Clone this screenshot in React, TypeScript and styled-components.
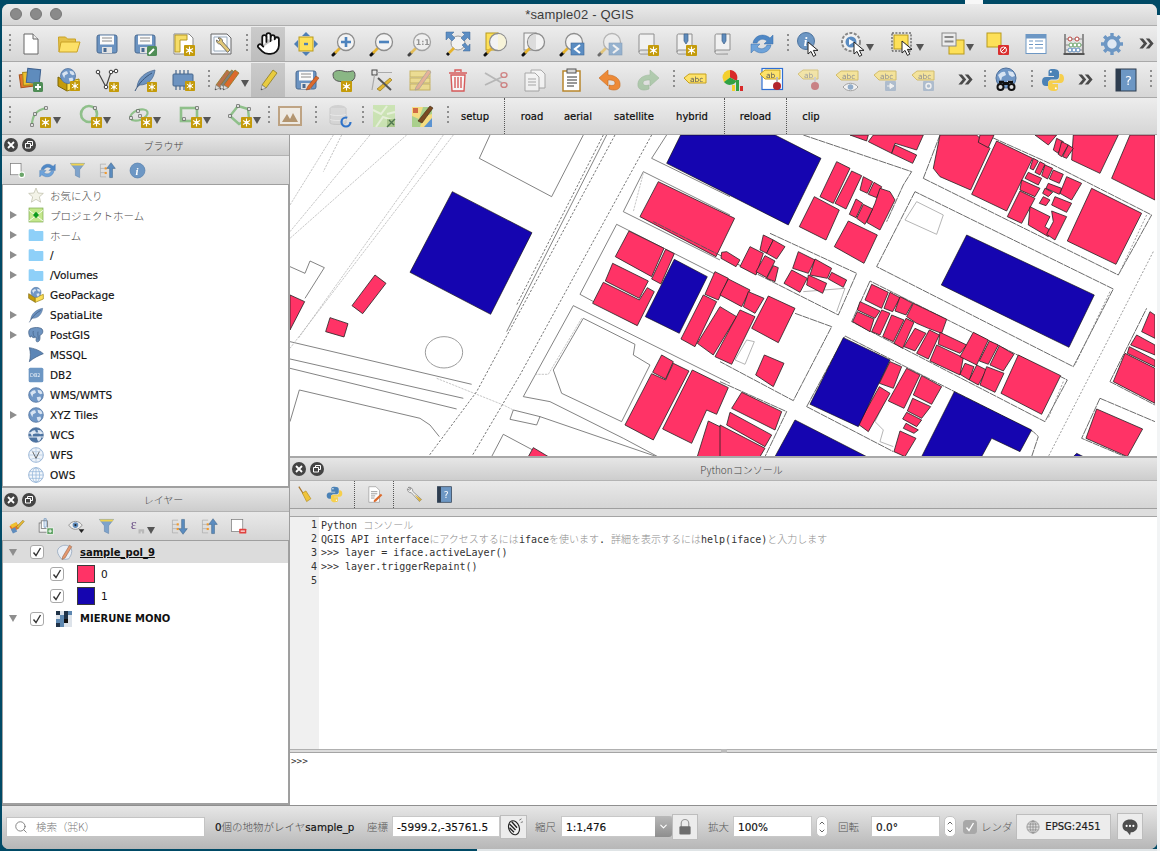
import React from 'react';
import styled, { createGlobalStyle } from 'styled-components';
import { Hand, Search, ChevronDown, ChevronUp } from 'lucide-react';

const Global = createGlobalStyle`
  html, body { margin: 0; padding: 0; background: #004a66; }
  * { box-sizing: border-box; }
`;

const UI = `"DejaVu Sans", "Noto Sans CJK JP", sans-serif`;
const CJK = `"Noto Sans CJK JP", sans-serif`;

/* ---------- icon parts ---------- */
const Badge = ({ x = 13, y = 13, s = 10 }: { x?: number; y?: number; s?: number }) => (
  <g transform={`translate(${x} ${y}) scale(${s / 10})`}>
    <rect width="10" height="10" rx="0.8" fill="#c49b0a" />
    <path d="M5 1.3v7.4M1.8 3.2l6.4 3.6M8.2 3.2L1.8 6.8" stroke="#fff" strokeWidth="1" />
    <circle cx="5" cy="5" r="1.6" fill="#fff" />
  </g>
);
const Glass = ({ children }: { children?: React.ReactNode }) => (
  <g>
    <path d="M1 23l2-2" stroke="#111" strokeWidth="3" strokeLinecap="round" />
    <path d="M3 21l5-5" stroke="#e6b32e" strokeWidth="2.6" />
    <circle cx="14" cy="10" r="8.5" fill="#f3f3f3" stroke="#8d8d8d" strokeWidth="1.3" />
    {children}
  </g>
);
const Cursor = ({ x = 10, y = 9 }: { x?: number; y?: number }) => (
  <path transform={`translate(${x} ${y})`} d="M0 0v12l3-2.6 2.4 5 2.4-1.2-2.4-4.8H10z" fill="#fff" stroke="#222" strokeWidth="1" strokeLinejoin="round" />
);
const Floppy = () => (
  <g>
    <rect x="2" y="3" width="20" height="18" rx="2" fill="#6b93c1" stroke="#4a6a90" />
    <rect x="5" y="3.5" width="14" height="9" fill="#fbfbfb" />
    <path d="M7 6h10M7 9h10" stroke="#8a8a8a" />
    <rect x="7" y="15" width="10" height="6" fill="#e3e3e3" />
    <rect x="8.5" y="16" width="3" height="4" fill="#4a6a90" />
  </g>
);
const Globe = ({ cx = 12, cy = 12, r = 10, c = '#7097c6', l = '#d8e4f2' }: { cx?: number; cy?: number; r?: number; c?: string; l?: string }) => (
  <g transform={`translate(${cx} ${cy}) scale(${r / 10})`}>
    <circle r="10" fill={c} stroke="#4d6f9b" />
    <path d="M-8-3c3-3 5-4 7-3l1 3-4 2-1 4zM2-7l5 1 2 4-3 1-3-2zM1 3l5-1 1 3-3 4-2-2z" fill={l} />
  </g>
);
const Tag = ({ t = 'abc', y = 2 }: { t?: string; y?: number }) => (
  <g transform={`translate(0 ${y})`}>
    <path d="M1 6l5-4h17v9H6z" fill="#fde26a" stroke="#c6a11c" />
    <text x="7" y="9.5" fontSize="7.4" fontFamily="DejaVu Sans, sans-serif" fill="#5b5b5b">{t}</text>
  </g>
);
const Pencil = ({ t = '', c = '#e8cb3f' }: { t?: string; c?: string }) => (
  <g transform={t}>
    <path d="M6 17L17 2l4 3L10 20z" fill={c} stroke="#8c7a24" strokeWidth="0.8" />
    <path d="M6 17l4 3-5 2z" fill="#ddd" stroke="#777" strokeWidth="0.6" />
    <path d="M5.6 20.4L5 22l1.6-.7z" fill="#222" />
  </g>
);
const Page = ({ x = 0, y = 0 }: { x?: number; y?: number }) => (
  <path transform={`translate(${x} ${y})`} d="M0 0h10l4 4v14H0z" fill="#fff" stroke="#777" />
);
const Scroll = () => (
  <path d="M3 4c0-2 1-2 2-2h13v16H5c-1 0-2 .6-2 2zM3 20c0 1.5 1 2 2 2h11" fill="#f1f1f1" stroke="#8e8e8e" />
);
const Book = () => (
  <path d="M10 2h4v7l-2 3-2-3z" fill="#5f8cbd" stroke="#41618a" strokeWidth="0.7" />
);
const Abc = () => <Tag y={1} />;
const Feather = ({ c = '#6d93c0' }: { c?: string }) => (
  <g>
    <path d="M4 19C5 10 12 4 22 2c-1 9-7 15-15 15z" fill={c} stroke="#47668c" strokeWidth="0.7" />
    <path d="M2 23C6 15 12 9 19 5" stroke="#39557a" fill="none" />
  </g>
);
const Nodes = ({ d, c = '#8fc08a' }: { d: string; c?: string }) => (
  <path d={d} fill="none" stroke={c} strokeWidth="2.2" />
);
const N = ({ x, y }: { x: number; y: number }) => <rect x={x - 1.3} y={y - 1.3} width="2.6" height="2.6" fill="#eee" stroke="#555" strokeWidth="0.7" />;

const icons: Record<string, React.ReactNode> = {
  new: (<g><path d="M5 2h9l5 5v15H5z" fill="#fff" stroke="#666" /><path d="M14 2v5h5" fill="#eee" stroke="#666" /></g>),
  open: (<g><path d="M2 20L1.5 5h7l2 2h8v4" fill="#e5c24a" stroke="#c9a227" /><path d="M4 10h19l-3 10H2z" fill="#fde168" stroke="#c9a227" /></g>),
  save: <Floppy />,
  saveas: (<g><Floppy /><rect x="14" y="14" width="10" height="10" rx="1.5" fill="#4f8d56" /><path d="M16 22l5-5" stroke="#fff" strokeWidth="2" /></g>),
  layout: (<g><path d="M3 2h15l4 4v16H3z" fill="#fff" stroke="#888" /><path d="M4 3h12v5H9v12H4z" fill="#f6dd68" stroke="#b79a24" /><Badge x={13} y={13} s={11} /></g>),
  layoutmgr: (<g><path d="M2 2h16l4 4v16H2z" fill="#f3f6fb" stroke="#666" /><path d="M5 5h13v14H5z" fill="#fff" stroke="#9ab" /><path d="M9 6a3.4 3.4 0 0 1 4.5 3.6L21 18l-2.4 2.4L11 12A3.4 3.4 0 0 1 7.5 8l2 1.4 1.6-1.6z" fill="#e2c878" stroke="#555" strokeWidth="0.8" /></g>),
  pantosel: (<g><rect x="5" y="5" width="14" height="14" fill="#fde058" stroke="#b89a1c" /><path d="M12 0l4 4h-8zM12 24l-4-4h8zM0 12l4-4v8zM24 12l-4 4V8z" fill="#4f7fb5" /><path d="M10 10.8h4v2.4h-4z" fill="#4f7fb5" /></g>),
  zoomin: <Glass><path d="M14 5v10M9 10h10" stroke="#4d83bd" strokeWidth="2.6" /></Glass>,
  zoomout: <Glass><path d="M9 10h10" stroke="#4d83bd" strokeWidth="2.6" /></Glass>,
  zoom11: (<g opacity="0.75"><Glass><text x="7.8" y="13" fontSize="7.8" fontWeight="700" fontFamily="DejaVu Sans, sans-serif" fill="#777">1:1</text></Glass></g>),
  zoomfull: (<g><circle cx="12" cy="11" r="7" fill="#f2f2f2" stroke="#999" /><path d="M0 0h8l-2.5 2.5L9 6 6 9 2.5 5.5 0 8zM24 0v8l-2.5-2.5L18 9l-3-3 3.5-3.5L16 0zM24 19h-7l2.5-2.5L16 13l3-2 3 3.5L24 12z" fill="#5c8ec4" stroke="#3c6694" strokeWidth="0.5" /><path d="M1 23l2-2" stroke="#111" strokeWidth="3" /><path d="M3 21l5-5" stroke="#e6b32e" strokeWidth="2.6" /></g>),
  zoomsel: (<g><rect x="2" y="1" width="12" height="17" fill="#fde058" stroke="#b89a1c" /><Glass><path d="M14 2a8 8 0 0 1 0 16z" fill="#f7f3d8" /></Glass></g>),
  zoomlayer: (<g><rect x="2" y="1" width="12" height="17" fill="#f3f3f3" stroke="#888" /><Glass><path d="M14 2a8 8 0 0 0 0 16z" fill="#dcdcdc" /></Glass></g>),
  zoomlast: (<g><Glass /><rect x="11" y="11" width="13" height="12" fill="#5a8cc2" stroke="#3f6898" strokeWidth="0.6" /><path d="M20 13l-5 4 5 4" fill="none" stroke="#fff" strokeWidth="2.2" /></g>),
  zoomnext: (<g opacity="0.55"><Glass /><rect x="11" y="11" width="13" height="12" fill="#5a8cc2" stroke="#3f6898" strokeWidth="0.6" /><path d="M15 13l5 4-5 4" fill="none" stroke="#fff" strokeWidth="2.2" /></g>),
  bmnew: (<g><Scroll /><Badge x={12} y={13} s={11} /></g>),
  bmshow: (<g><Scroll /><Book /><Badge x={12} y={13} s={11} /></g>),
  bmlist: (<g><Scroll /><Book /></g>),
  refresh: (<g><path d="M3 11C4 4 13 0 20 6l3-3v9h-9l3-3c-4-3-8-2-10 2z" fill="#4f88c6" stroke="#3a6ea8" strokeWidth="0.5" /><path d="M21 13C20 20 11 24 4 18l-3 3v-9h9l-3 3c4 3 8 2 10-2z" fill="#6ea3da" stroke="#3a6ea8" strokeWidth="0.5" /></g>),
  identify: (<g><circle cx="9" cy="9" r="8.5" fill="#6d97c4" stroke="#4d749f" /><text x="6.8" y="14" fontSize="13" fontWeight="700" fontStyle="italic" fontFamily="Liberation Serif, serif" fill="#fff">i</text><Cursor x={11} y={10} /></g>),
  action: (<g><circle cx="10" cy="10" r="9" fill="#f1f1f1" stroke="#888" strokeWidth="2" strokeDasharray="3 1.5" /><circle cx="10" cy="10" r="5.5" fill="#5a8cc2" /><path d="M8 7l5 3-5 3z" fill="#fff" /><Cursor x={13} y={10} /></g>),
  select: (<g><rect x="1" y="1" width="19" height="18" fill="none" stroke="#333" strokeDasharray="2 1.4" /><rect x="3" y="3" width="14" height="14" fill="#fde058" stroke="#b89a1c" /><Cursor x={11} y={9} /></g>),
  selattr: (<g><rect x="8" y="8" width="15" height="14" fill="#fde058" stroke="#b89a1c" /><rect x="1" y="1" width="14" height="13" fill="#ececec" stroke="#888" /><path d="M3.5 5h9M3.5 9.5h9" stroke="#888" strokeWidth="2" /></g>),
  deselect: (<g><rect x="1" y="1" width="14" height="14" fill="#fde058" stroke="#b89a1c" /><rect x="12" y="13" width="11" height="10" rx="1" fill="#d92f2f" /><circle cx="17.5" cy="18" r="3" fill="none" stroke="#fff" /><path d="M15 20l5-5" stroke="#fff" /></g>),
  table: (<g><rect x="2" y="2.5" width="20" height="19" fill="#fff" stroke="#6d97c4" /><rect x="2" y="2.5" width="20" height="4" fill="#6d97c4" /><path d="M5 9h4M11 9h8M5 12.5h4M11 12.5h8M5 16h4M11 16h8" stroke="#6d97c4" /></g>),
  stats: (<g><path d="M3 2v20M21 2v20" stroke="#555" strokeWidth="1.2" /><path d="M3 7h18M3 13h18M3 18h18" stroke="#888" /><path d="M1.5 22h21" stroke="#555" strokeWidth="2" />{[8, 15].map(x => <circle key={x} cx={x} cy="7" r="2" fill="#fff" stroke="#b9423d" />)}{[9, 13, 17].map(x => <circle key={x} cx={x} cy="13" r="2" fill="#fff" stroke="#6ba56a" />)}{[8, 12, 16].map(x => <circle key={x} cx={x} cy="18" r="2" fill="#fff" stroke="#5f8cbd" />)}</g>),
  gear: (<g><circle cx="12" cy="12" r="6.5" fill="#dfe8f3" stroke="#6d97c4" strokeWidth="3.6" /><path d="M12 1v4M12 19v4M1 12h4M19 12h4M4.200 4.200L7 7M17 17l2.800 2.800M19.800 4.200L17 7M7 17l-2.800 2.800" stroke="#6d97c4" strokeWidth="3.400" /></g>),

  dsm: (<g><rect x="1" y="6" width="13" height="13" fill="#e5752c" stroke="#a8521c" transform="rotate(-8 7 12)" /><rect x="4" y="4" width="13" height="13" fill="#efc12f" stroke="#a98c1e" transform="rotate(-4 10 10)" /><rect x="8" y="1" width="13" height="14" fill="#5f8cbd" stroke="#3f6290" transform="rotate(6 14 8)" /><rect x="14" y="14" width="10" height="10" rx="1.5" fill="#4f8d56" /><path d="M19 16v6M16 19h6" stroke="#fff" strokeWidth="1.8" /></g>),
  gpkg: (<g><path d="M1 9l9 5v9l-9-5z" fill="#c49b0a" stroke="#7a6407" /><path d="M10 14l12-3v8l-12 4z" fill="#fde058" stroke="#9b800a" /><Globe cx={11} cy={8} r={7.5} /><Badge x={13} y={13} s={10} /></g>),
  vertices: (<g><path d="M3 4l8 15 5-15 5-1" fill="none" stroke="#444" strokeWidth="1.2" /><circle cx="3" cy="4" r="1.8" fill="#fff" stroke="#333" /><circle cx="11" cy="19" r="1.8" fill="#fff" stroke="#333" /><circle cx="16" cy="4" r="1.8" fill="#fff" stroke="#333" /><circle cx="21" cy="3" r="1.8" fill="#fff" stroke="#333" /><Badge x={14} y={14} /></g>),
  spatialite: (<g><Feather /><Badge x={14} y={14} /></g>),
  scratch: (<g><rect x="2" y="6" width="20" height="12" rx="1" fill="#6d93c0" stroke="#47668c" /><path d="M5 2v4M9 2v4M13 2v4M17 2v4M5 18v4M9 18v4M13 18v4" stroke="#47668c" strokeWidth="1.2" /><Badge x={14} y={13} /></g>),
  edits: (<g><Pencil c="#b9714a" t="translate(-6 0)" /><Pencil c="#7f7f7f" t="translate(-1 0) scale(.98)" /><Pencil c="#dc6a2c" t="translate(2 0)" /></g>),
  pencil: <Pencil />,
  saveedits: (<g><Floppy /><path d="M12 22l2-4L22 8l3 2-9 11z" fill="#dc6a2c" stroke="#8a3f16" strokeWidth="0.5" /></g>),
  addpoly: (<g><path d="M1 6c1-4 7-4 10-3s6 1 9 0 4 5 2 8-7 4-11 3-10 0-10-8z" fill="#8ab785" stroke="#555" /><Badge x={9} y={13} s={11} /></g>),
  vertextool: (<g><rect x="2" y="2" width="5" height="5" fill="none" stroke="#444" /><path d="M7 4.5h15M4.5 7L2 22" stroke="#aaa" strokeWidth="1.2" /><path d="M7 21L20 10l2 2L10 23z" fill="#e2b634" stroke="#7f6a18" strokeWidth="0.6" /><path d="M8 10l13 12" stroke="#555" strokeWidth="2" /></g>),
  multiedit: (<g opacity="0.65"><rect x="2" y="3" width="20" height="6" fill="#f0d768" stroke="#b79a24" /><rect x="2" y="10" width="20" height="5" fill="#f0d768" stroke="#b79a24" /><rect x="2" y="16" width="20" height="6" fill="#f0d768" stroke="#b79a24" /><path d="M8 19L20 2l3 2-12 17-4 1z" fill="#e59870" stroke="#777" strokeWidth="0.6" /></g>),
  trash: (<g opacity="0.75"><path d="M5 7h14l-1 16H6z" fill="#fff" stroke="#d32f2f" strokeWidth="1.4" /><path d="M3 5h18M9 4V2h6v2M9 9v11M12 9v11M15 9v11" stroke="#d32f2f" strokeWidth="1.4" fill="none" /></g>),
  cut: (<g opacity="0.6"><path d="M1 5l17 10M1 17L18 9" stroke="#9a9a9a" strokeWidth="1.8" /><ellipse cx="20" cy="7" rx="3" ry="2.4" fill="none" stroke="#c24545" strokeWidth="1.4" /><ellipse cx="20" cy="17" rx="3" ry="2.4" fill="none" stroke="#c24545" strokeWidth="1.4" /></g>),
  copy: (<g opacity="0.55"><Page x={9} y={2} /><Page x={3} y={5} /><path d="M6 11h8M6 14h8M6 17h8" stroke="#777" /></g>),
  paste: (<g><rect x="3" y="3" width="17" height="20" fill="#fff" stroke="#b8862c" strokeWidth="1.5" /><rect x="7" y="1" width="9" height="4" fill="#d8d8d8" stroke="#555" /><path d="M7 9h10M7 12h10M7 15h10M7 18h7" stroke="#333" /></g>),
  undo: (<g><path d="M1 10l9-8v5c7 0 13 4 12 11-.6 4-6 5-11 3v-4c3 1 6 .6 6-2 0-3-4-3-7-3v6z" fill="#ed8a37" stroke="#c56a20" strokeWidth="0.6" /></g>),
  redo: (<g opacity="0.5"><path d="M23 10l-9-8v5C7 7 1 11 2 18c.6 4 6 5 11 3v-4c-3 1-6 .6-6-2 0-3 4-3 7-3v6z" fill="#7fb27a" stroke="#5e925a" strokeWidth="0.6" /></g>),
  label: <Tag y={4} />,
  diagram: (<g><path d="M9 2a7.5 7.5 0 0 1 6.5 11L9 9.5z" fill="#d92a2a" /><path d="M1.5 9.5A7.5 7.5 0 0 1 9 2v7.5l-6 5z" fill="#f3cf2d" /><path d="M3 14l6-4.5 6.500 3.500A7.500 7.500 0 0 1 3 14z" fill="#2fa143" /><rect x="11" y="17" width="3" height="6" fill="#f3cf2d" /><rect x="15" y="12" width="3" height="11" fill="#2fa143" /><rect x="19" y="18" width="3" height="5" fill="#d92a2a" /></g>),
  labelpin: (<g><rect x="3" y="0.5" width="20.500" height="21" fill="#fff" stroke="#2f6fd3" strokeWidth="1.200" /><path d="M1 6l5-4h15v9H6z" fill="#fde26a" stroke="#c6a11c" /><text x="7" y="9.500" fontSize="7.400" fontFamily="DejaVu Sans, sans-serif" fill="#5b5b5b">ab</text><circle cx="18" cy="18" r="4" fill="#b3262d" /><path d="M18 9v5" stroke="#bbb" strokeWidth="2" /></g>),
  labelshow: (<g opacity="0.5"><path d="M1 6l5-4h15v9H6z" fill="#fde26a" stroke="#c6a11c" /><text x="7" y="9.500" fontSize="7.400" fontFamily="DejaVu Sans, sans-serif" fill="#5b5b5b">ab</text><circle cx="18" cy="18" r="4" fill="#b3262d" /><path d="M18 9v5" stroke="#bbb" strokeWidth="2" /></g>),
  labeleye: (<g opacity="0.6"><Abc /><path d="M8 19c4-5 11-5 15 0-4 5-11 5-15 0z" fill="#fff" stroke="#777" /><circle cx="15.500" cy="19" r="2.800" fill="#5f8cbd" /></g>),
  labelmove: (<g opacity="0.6"><Abc /><rect x="12" y="13" width="11" height="10" rx="1" fill="#8ea6c2" /><path d="M14 18h3v-2.500l4 2.500-4 2.500V18" fill="#fff" stroke="#fff" /></g>),
  labelrot: (<g opacity="0.6"><Abc /><rect x="12" y="13" width="11" height="10" rx="1" fill="#8ea6c2" /><circle cx="17.500" cy="18" r="2.500" fill="none" stroke="#fff" strokeWidth="1.400" /></g>),
  metasearch: (<g><Globe cx={12} cy={10} r={10} /><path d="M9 14h6v3H9z" fill="#111" /><circle cx="6.500" cy="19" r="4" fill="#111" /><circle cx="17.500" cy="19" r="4" fill="#111" /><circle cx="6.500" cy="19" r="2" fill="#ddd" /><circle cx="17.500" cy="19" r="2" fill="#ddd" /><path d="M5 14h5M14 14h5" stroke="#111" strokeWidth="2.400" /></g>),
  python: (<g><path d="M12 1C7 1 7.500 3 7.500 5.500V8H13v1H5C2 9 1 11 1 13.500S2 18 5 18h2v-3c0-2 1.500-3.500 3.500-3.500H15c1.700 0 3-1.300 3-3V4.500C18 2 15.500 1 12 1z" fill="#4b82b6" /><circle cx="9.800" cy="3.800" r="1" fill="#fff" /><path d="M12.500 23c5 0 4.500-2 4.500-4.500V16h-5.500v-1H19c3 0 4-2 4-4.500S22 6 19 6h-.500v3.500c0 2-1.500 3-3.500 3H10c-1.700 0-3 1.300-3 3V19c0 2.500 2 4 5.500 4z" fill="#f6cf4d" /><circle cx="14.800" cy="20.200" r="1" fill="#fff" /></g>),
  help: (<g><rect x="2" y="1" width="20" height="22" fill="#6d97c4" stroke="#2e3d4f" /><rect x="2" y="1" width="5" height="22" fill="#2e3d4f" /><text x="11" y="16.500" fontSize="13" fontFamily="DejaVu Sans, sans-serif" fill="#fff">?</text></g>),

  dline: (<g><Nodes d="M4 21c0-9 5-15 14-17" /><N x={4} y={21} /><N x={7} y={10} /><N x={18} y={4} /><Badge x={12} y={13} s={11} /></g>),
  dcircle: (<g><circle cx="11" cy="10" r="8" fill="none" stroke="#8fc08a" strokeWidth="2.600" /><N x={17} y={4} /><Badge x={13} y={13} s={11} /></g>),
  dellipse: (<g><ellipse cx="11" cy="11" rx="9" ry="5" transform="rotate(-20 11 11)" fill="none" stroke="#8fc08a" strokeWidth="2.200" /><N x={3} y={14} /><N x={10} y={7} /><N x={12} y={12} /><Badge x={13} y={13} s={11} /></g>),
  drect: (<g><rect x="3" y="4" width="16" height="13" fill="none" stroke="#8fc08a" strokeWidth="2.600" /><N x={19} y={4} /><N x={6} y={15} /><Badge x={13} y={13} s={11} /></g>),
  dpoly: (<g><path d="M10 2l10 3 1 10-10 5-9-8z" fill="none" stroke="#8fc08a" strokeWidth="2.400" /><N x={10} y={2} /><N x={2} y={12} /><N x={21} y={5} /><Badge x={13} y={13} s={11} /></g>),
  raster: (<g opacity="0.75"><rect x="1" y="3" width="22" height="18" fill="#f2ece3" stroke="#b28e63" strokeWidth="2" /><path d="M4 18l5-8 3 5 3-6 5 9z" fill="#a57c4a" /></g>),
  dbrefresh: (<g opacity="0.45"><ellipse cx="10" cy="4" rx="8" ry="3" fill="#b5b5b5" /><path d="M2 4v15c0 2 16 2 16 0V4" fill="#c9c9c9" stroke="#aaa" /><path d="M2 10c0 2 16 2 16 0M2 15c0 2 16 2 16 0" stroke="#eee" fill="none" /></g>),
  dbloop: <circle cx="18" cy="18" r="4.500" fill="none" stroke="#2f73c9" strokeWidth="2.200" strokeDasharray="22 6" />,
  topomap: (<g opacity="0.8"><rect x="1" y="1" width="22" height="22" fill="#c5e3a8" /><path d="M1 6l8 4 6-8M4 23l7-10 12 4M15 10l8-2" stroke="#e6f2d8" strokeWidth="2" fill="none" /><rect x="15" y="15" width="8" height="8" fill="#9ec27a" /><path d="M15 23l8-8M17 16l5 5" stroke="#2c5e2c" strokeWidth="1.400" /></g>),
  composer: (<g><rect x="2" y="3" width="20" height="20" fill="#f5dc80" /><path d="M2 12l7 3 4-12h9v7l-9 3-3 10H2z" fill="#a9cf8c" /><path d="M14 23l8-9v9z" fill="#5b93d1" /><path d="M8 17L20 2l3 2-11 15z" fill="#7a4a22" stroke="#3e2610" strokeWidth="0.6" /><path d="M3 4h5v5H3z" fill="#c0392b" opacity="0.7" /></g>),

  addlayer: (<g><rect x="2" y="2" width="15" height="16" fill="#fff" stroke="#777" /><circle cx="18" cy="18" r="4" fill="#6ba56a" stroke="#fff" strokeWidth="1.500" /></g>),
  filter: (<g><path d="M2 2h20l-7 9v11l-6-3v-8z" fill="#7fa3cb" stroke="#557ca8" strokeWidth="0.7" /><path d="M2 2h20l-2 3H4z" fill="#f0d24f" /></g>),
  collapse: (<g><path d="M2 3h8M2 3v18M2 9h8M2 15h8M2 21h8" stroke="#aaa" fill="none" /><rect x="8" y="7.500" width="3" height="3" fill="#f29a2e" /><rect x="8" y="14" width="3" height="3" fill="#f29a2e" /><path d="M17 1l6 8h-4v13h-4V9h-4z" fill="#5b8cc0" stroke="#34597f" strokeWidth="0.7" /></g>),
  expand: (<g><path d="M2 3h8M2 3v18M2 9h8M2 15h8M2 21h8" stroke="#aaa" fill="none" /><rect x="8" y="7.500" width="3" height="3" fill="#f29a2e" /><rect x="8" y="14" width="3" height="3" fill="#f29a2e" /><path d="M17 23l6-8h-4V2h-4v13h-4z" fill="#5b8cc0" stroke="#34597f" strokeWidth="0.7" /></g>),
  info: (<g><circle cx="12" cy="12" r="10.500" fill="#6d97c4" stroke="#5580ad" /><text x="9.200" y="18" fontSize="15" fontWeight="700" fontStyle="italic" fontFamily="Liberation Serif, serif" fill="#fff">i</text></g>),
  style: (<g><path d="M2 12l10-6 4 8-9 6z" fill="#e5752c" /><path d="M4 16l6-3 3 6-6 3z" fill="#5f8cbd" /><path d="M3 10l8-4 3 4-8 4z" fill="#efc12f" /><path d="M12 12L21 3l2 2-9 10z" fill="#e2b634" stroke="#7f6a18" strokeWidth="0.6" /></g>),
  addgroup: (<g><rect x="3" y="7" width="12" height="13" fill="#f2f2f2" stroke="#666" /><rect x="6" y="4" width="9" height="11" fill="#fff" stroke="#666" /><path d="M10 1h3v12h-3z" fill="none" stroke="#5f8cbd" /><rect x="14" y="14" width="9" height="9" fill="#5aa05f" stroke="#fff" /><path d="M18.500 16v5M16 18.500h5" stroke="#fff" strokeWidth="1.400" /></g>),
  eye: (<g><path d="M1 10c5-7 14-7 19 0-5 8-14 8-19 0z" fill="#eee" stroke="#777" /><circle cx="10.500" cy="10" r="4" fill="#5f8cbd" /><circle cx="10.500" cy="10" r="1.500" fill="#222" /><path d="M15 16h8l-4 5z" fill="#222" /></g>),
  expr: (<g><text x="1" y="15" fontSize="20" fontFamily="Liberation Serif, serif" fill="#6b4f86">ε</text><path d="M12 16h8v6h-3v-3h-2v3h-3z" fill="#b9b9b9" /></g>),
  removelayer: (<g><rect x="2" y="2" width="16" height="17" fill="#fff" stroke="#777" /><rect x="13" y="15" width="10" height="7" rx="1" fill="#e0413e" /><path d="M15 18.500h6" stroke="#fff" strokeWidth="1.600" /></g>),

  star: (<path d="M12 1.500l3 7.500 8 .6-6 5.200 2 8-7-4.300-7 4.300 2-8-6-5.200 8-.6z" fill="#f3f3e8" stroke="#b9b9a5" />),
  project: (<g><rect x="1.500" y="1.500" width="21" height="21" fill="#c4e78d" stroke="#79a64b" /><path d="M1.500 5l21 16M22.500 5L1.500 21" stroke="#fff" strokeWidth="1.300" /><path d="M12 7l4.500 5-4.500 5-4.500-5z" fill="#0c9a20" /></g>),
  folder: (<path d="M1 5c0-1 .5-1.500 1.500-1.500h6l2 2.500H22c.6 0 1 .4 1 1V20c0 .6-.4 1-1 1H2c-.6 0-1-.4-1-1z" fill="#8ed0f8" />),
  gpkgsm: (<g><path d="M1 10l10 6v7L1 17z" fill="#c49b0a" stroke="#7a6407" /><path d="M11 16l12-5v7l-12 5z" fill="#fde058" stroke="#9b800a" /><Globe cx={12} cy={8} r={7.500} /></g>),
  feather: <Feather />,
  postgis: (<g><path d="M3 3c5-3 15-3 18 0 3 4 0 9-3 9v5c0 4-3 6-5 5-2-2 0-5-1-7-3 2-6 1-7-2-1 3-2 3-3 0C1 10 0 6 3 3z" fill="#6d93c0" stroke="#3c5b80" /><path d="M8 6c-1 3 0 7 2 9M15 7c-1 4 1 8 0 12" stroke="#3c5b80" fill="none" /></g>),
  mssql: (<path d="M2 1c6 1 14 3 21 9-7 3-14 6-21 12 2-7 2-14 0-21z" fill="#5c86b6" stroke="#3c5b80" />),
  db2: (<g><rect x="1" y="1" width="22" height="22" rx="2.500" fill="#6d97c4" /><text x="3" y="15" fontSize="7.600" fontFamily="DejaVu Sans, sans-serif" fill="#eaf1f8">DB2</text></g>),
  wms: <Globe r={11} />,
  wcs: (<g><Globe r={11} c="#4d74a2" /><path d="M1 9h22M1 15h22" stroke="#e8eef6" strokeWidth="1.500" /></g>),
  wfs: (<g><circle cx="12" cy="12" r="11" fill="#eef3f9" stroke="#7097c6" /><path d="M1 12h22M12 1v22M4 5c5 3 11 3 16 0M4 19c5-3 11-3 16 0" stroke="#a9c1dc" fill="none" /><path d="M7 7l5 10 5-10" fill="none" stroke="#555" strokeWidth="1.300" /></g>),
  ows: (<g><circle cx="12" cy="12" r="11" fill="#f4f8fc" stroke="#7097c6" /><path d="M1 12h22M12 1v22M2.500 7h19M2.500 17h19" stroke="#8db0d6" fill="none" /><ellipse cx="12" cy="12" rx="5.500" ry="11" fill="none" stroke="#8db0d6" /></g>),

  broom: (<g><path d="M4 1l7 11" stroke="#a9762b" strokeWidth="1.800" /><path d="M9 10l5-3 7 11-6 4z" fill="#f0c43a" stroke="#b58f1e" /></g>),
  script: (<g><path d="M4 1h10l5 5v17H4z" fill="#fff" stroke="#999" /><path d="M7 8h9M7 11h9M7 14h6M7 17h5" stroke="#777" /><path d="M11 20l10-9 2 2-9 9-3 1z" fill="#dc6a2c" /></g>),
  wrench: (<g><path d="M3 2a5 5 0 0 1 6.500 5.500L22 19l-3 3L7.500 9.500A5 5 0 0 1 2 4l3 2 2-2z" fill="#f0f0f0" stroke="#777" /><path d="M12 12l10 7-3 3z" fill="#dcb23a" /></g>),
  mouse: (<g><ellipse cx="12" cy="13" rx="7" ry="9.500" fill="#f2f2f2" stroke="#222" strokeWidth="1.500" transform="rotate(-20 12 13)" /><path d="M6 8l8 8M9 5l7 8M6 13l6 6" stroke="#222" strokeWidth="1.800" /><path d="M19 3l3-2M21 6l3-1" stroke="#555" /></g>),
  lock: (<g><path d="M7 12V7a5 5 0 0 1 10 0v5" fill="none" stroke="#9a9a9a" strokeWidth="1.600" /><rect x="4.500" y="11" width="15" height="11" rx="1.500" fill="#6d6d6d" /></g>),
  chat: (<g><path d="M12 2c6 0 10 3.500 10 8.500S18 19 13 19l-1 4-4-5c-4-1-6-4-6-7.500C2 5.500 6 2 12 2z" fill="#4e4e4e" /><circle cx="7.500" cy="10.500" r="1.400" fill="#fff" /><circle cx="12" cy="10.500" r="1.400" fill="#fff" /><circle cx="16.500" cy="10.500" r="1.400" fill="#fff" /></g>),
  crs: (<g><circle cx="12" cy="12" r="10.500" fill="#ddd" stroke="#777" /><path d="M1.500 12h21M12 1.500v21M3 7h18M3 17h18" stroke="#777" /><ellipse cx="12" cy="12" rx="5" ry="10.500" fill="none" stroke="#777" /></g>),
  more: (<path d="M2 5l6 7-6 7h5l6-7-6-7zM11 5l6 7-6 7h5l6-7-6-7z" fill="#4a4a4a" />),
  mierune: (<g><rect x="0" y="0" width="24" height="24" fill="#dde3ea" /><rect x="0" y="0" width="6" height="6" fill="#1f3247" /><rect x="12" y="0" width="6" height="6" fill="#1f3247" /><rect x="6" y="6" width="6" height="6" fill="#5d87b0" /><rect x="18" y="0" width="6" height="6" fill="#5d87b0" /><rect x="12" y="6" width="6" height="6" fill="#1f3247" /><rect x="0" y="12" width="6" height="6" fill="#5d87b0" /><rect x="6" y="12" width="6" height="6" fill="#5d87b0" /><rect x="12" y="12" width="6" height="6" fill="#111" /><rect x="0" y="18" width="6" height="6" fill="#1f3247" /><rect x="6" y="18" width="6" height="6" fill="#5d87b0" /></g>),
  polylayer: (<g><path d="M12 3c5 0 9 3 9 8s-3 8-4 10c-4 1-7 1-10 0-2-3-5-6-5-10s5-8 10-8z" fill="#e9eef5" stroke="#8fa3bb" /><path d="M9 18L18 3l3 2-9 15-4 2z" fill="#e59870" stroke="#8a5a3c" strokeWidth="0.7" /></g>),
};

const IconSvg = styled.svg<{ $size: number }>`
  width: ${p => p.$size}px;
  height: ${p => p.$size}px;
  display: block;
  flex: none;
  overflow: visible;
  filter: blur(0.2px);
`;
const Icon = ({ n, size = 24 }: { n: string; size?: number }) => (
  <IconSvg $size={size} viewBox="0 0 24 24">{icons[n]}</IconSvg>
);

/* ---------- frame ---------- */
const Desktop = styled.div`
  width: 1160px;
  height: 851px;
  overflow: hidden;
  padding: 4px 3px 2px 2px;
  background:
    linear-gradient(#f7f7f7, #f7f7f7) 965px 0 / 18px 4px no-repeat,
    linear-gradient(#f2f4f5, #f2f4f5) 1157px 15px / 3px 836px no-repeat,
    linear-gradient(#dfe4e6, #dfe4e6) 477px 849px / 683px 2px no-repeat,
    #004a66;
`;
const Window = styled.div`
  width: 100%;
  height: 100%;
  border-radius: 7px;
  overflow: hidden;
  display: flex;
  flex-direction: column;
  background: #cfcfcf;
  font-family: ${UI};
`;
const TitleBar = styled.div`
  height: 22px;
  flex: none;
  position: relative;
  display: flex;
  align-items: center;
  justify-content: center;
  background: linear-gradient(#ebebeb, #d4d4d4);
  border-bottom: 1px solid #adadad;
  font: 13px "Liberation Sans", sans-serif;
  letter-spacing: 0.2px;
  color: #3c3c3c;
`;
const Lights = styled.div`
  position: absolute;
  left: 8px;
  top: 4px;
  display: flex;
  gap: 8px;
`;
const Light = styled.span`
  width: 12px;
  height: 12px;
  border-radius: 50%;
  background: #8a8a8a;
  border: 1px solid #777;
`;
const Toolbar = styled.div<{ $h?: number }>`
  height: ${p => p.$h ?? 36}px;
  flex: none;
  display: flex;
  align-items: center;
  overflow: hidden;
  background: linear-gradient(#ededed, #d6d6d6);
  border-bottom: 1px solid #a9a9a9;
`;
const ToolButton = styled.div<{ $w: number; $shift?: number; $active?: boolean }>`
  width: ${p => p.$w}px;
  height: 100%;
  flex: none;
  padding-left: ${p => p.$shift ?? 0}px;
  display: flex;
  align-items: center;
  justify-content: center;
  position: relative;
  ${p => p.$active ? 'background: linear-gradient(#cbcbcb, #bdbdbd) 2px 1px / 34px 34px no-repeat; ' : ''}
`;
const DropButton = styled.div<{ $w: number; $pad: number }>`
  width: ${p => p.$w}px;
  height: 100%;
  flex: none;
  padding-left: ${p => p.$pad}px;
  display: flex;
  align-items: center;
`;
const Caret = styled.span`
  width: 0;
  height: 0;
  flex: none;
  margin: 8px 0 0 1px;
  border-left: 4.5px solid transparent;
  border-right: 4.5px solid transparent;
  border-top: 7px solid #555;
`;
const Handle = styled.div<{ $w: number }>`
  width: ${p => p.$w}px;
  height: 20px;
  flex: none;
  padding-right: 1px;
  display: flex;
  justify-content: flex-end;
  &::after {
    content: '';
    width: 2px;
    height: 100%;
    background: repeating-linear-gradient(#8e8e8e 0 2px, transparent 2px 5px);
  }
`;
const TextTool = styled.div<{ $w: number }>`
  width: ${p => p.$w}px;
  flex: none;
  text-align: center;
  font-size: 10px;
  color: #0a0a0a;
  -webkit-text-stroke: 0.2px #0a0a0a;
`;
const DotSep = styled.div<{ $w: number }>`
  width: ${p => p.$w}px;
  height: 100%;
  flex: none;
  padding-right: 1px;
  display: flex;
  justify-content: flex-end;
  &::after {
    content: '';
    height: 100%;
    border-right: 1px dotted #555;
  }
`;

type Item =
  | { k: 'b'; i: string; w?: number; s?: number; a?: boolean }
  | { k: 'd'; i: string; w: number; p: number; size?: number }
  | { k: 'h'; w: number }
  | { k: 't'; l: string; w: number }
  | { k: 's'; w: number };

const b = (i: string, w = 38, s = 0, a = false): Item => ({ k: 'b', i, w, s, a });
const d = (i: string, w = 50, p = 13): Item => ({ k: 'd', i, w, p });
const h = (w: number): Item => ({ k: 'h', w });
const t = (l: string, w: number): Item => ({ k: 't', l, w });
const s = (w: number): Item => ({ k: 's', w });

const row1: Item[] = [h(10), b('new'), b('open'), b('save'), b('saveas'), b('layout'), b('layoutmgr'), h(9), b('pan', 38, 0, true), b('pantosel'), b('zoomin'), b('zoomout'), b('zoom11'), b('zoomfull'), b('zoomsel'), b('zoomlayer'), b('zoomlast'), b('zoomnext'), b('bmnew'), b('bmshow'), b('bmlist'), b('refresh'), h(9), b('identify'), d('action'), d('select'), d('selattr'), b('deselect', 39), b('table'), b('stats'), b('gear'), b('more', 30)];
const row2: Item[] = [h(10), b('dsm'), b('gpkg'), b('vertices'), b('spatialite'), b('scratch'), h(9), { k: 'd', i: 'edits', w: 38, p: 5 }, b('pencil', 38, 0, true), b('saveedits'), b('addpoly'), b('vertextool'), b('multiedit'), b('trash'), b('cut'), b('copy'), b('paste'), b('undo'), b('redo'), h(9), b('label'), b('diagram'), b('labelpin'), b('labelshow'), b('labeleye'), b('labelmove'), b('labelrot'), b('more', 40, 6), h(5), b('metasearch'), h(9), b('python'), b('more', 27), h(8), b('help'), h(8)];
const row3: Item[] = [h(10), d('dline', 50, 16), d('dcircle', 50, 16), d('dellipse', 50, 16), d('drect', 50, 16), d('dpoly', 50, 16), h(9), b('raster'), h(9), b('dbrefresh', 38, 6), h(9), b('topomap'), b('composer'), h(9), t('setup', 50), s(6), t('road', 52), t('aerial', 40), t('satellite', 72), t('hybrid', 44), s(12), t('reload', 59), s(3), t('clip', 46)];

const renderItems = (items: Item[]) => items.map((it, i) => {
  switch (it.k) {
    case 'h': return <Handle key={i} $w={it.w} />;
    case 's': return <DotSep key={i} $w={it.w} />;
    case 't': return <TextTool key={i} $w={it.w}>{it.l}</TextTool>;
    case 'd': return <DropButton key={i} $w={it.w} $pad={it.p}><Icon n={it.i} /><Caret /></DropButton>;
    default:
      return (
        <ToolButton key={i} $w={it.w ?? 38} $shift={it.s} $active={it.a}>
          {it.i === 'pan'
            ? <Hand size={25} color="#111" fill="#fff" strokeWidth={1.7} />
            : it.i === 'dbrefresh'
              ? <IconSvg $size={24} viewBox="0 0 24 24">{icons.dbrefresh}{icons.dbloop}</IconSvg>
              : it.i === 'more' ? <Icon n="more" size={17} /> : <Icon n={it.i} />}
        </ToolButton>
      );
  }
});

/* ---------- docks ---------- */
const Body = styled.div`
  flex: 1;
  min-height: 0;
  display: grid;
  grid-template-columns: 287px 1fr;
`;
const LeftColumn = styled.div`
  display: flex;
  flex-direction: column;
  min-height: 0;
`;
const RightColumn = styled.div`
  display: flex;
  flex-direction: column;
  min-height: 0;
  border-left: 1px solid #9e9e9e;
`;
const DockHeader = styled.div<{ $h: number }>`
  height: ${p => p.$h}px;
  flex: none;
  position: relative;
  display: flex;
  align-items: center;
  justify-content: center;
  padding-left: 36px;
  background: linear-gradient(#e6e6e6, #cdcdcd);
  border-bottom: 1px solid #b3b3b3;
  font: 300 10px ${CJK};
  color: #444;
`;
const DockControls = styled.div`
  position: absolute;
  left: 2px;
  top: 50%;
  transform: translateY(-50%);
  display: flex;
  gap: 4px;
`;
const DockControl = styled.span`
  width: 14px;
  height: 14px;
  border-radius: 50%;
  background: #444;
  display: flex;
  align-items: center;
  justify-content: center;
`;
const DockBar = styled.div<{ $h: number }>`
  height: ${p => p.$h}px;
  flex: none;
  display: flex;
  align-items: center;
  background: linear-gradient(#e9e9e9, #d5d5d5);
  border-bottom: 1px solid #9f9f9f;
`;
const Tree = styled.div<{ $h?: number }>`
  ${p => p.$h ? `height: ${p.$h}px; flex: none;` : 'flex: 1; min-height: 0;'}
  background: #fff;
  border: 1px solid #a0a0a0;
  border-width: 0 1px 2px 1px;
  overflow: hidden;
  padding-top: 0;
`;
const TreeRow = styled.div`
  height: 20px;
  display: flex;
  align-items: center;
  font-size: 10.500px;
  color: #111;
  -webkit-text-stroke: 0.15px #111;
`;
const Arrow = styled.span<{ $show: boolean }>`
  width: 0;
  height: 0;
  flex: none;
  margin: 0 6px 0 7px;
  border-top: 4.500px solid transparent;
  border-bottom: 4.500px solid transparent;
  border-left: ${p => (p.$show ? '7px solid #8e8e8e' : '7px solid transparent')};
`;
const TreeIcon = styled.span`
  width: 16px;
  margin: 0 6px 0 5px;
  flex: none;
  display: flex;
  justify-content: center;
`;
const JpLabel = styled.span`
  font: 300 10.500px ${CJK};
  color: #4a4a4a;
  -webkit-text-stroke: 0;
`;

const LayerRow = styled.div<{ $sel?: boolean; $indent?: number; $h?: number }>`
  height: ${p => p.$h ?? 22}px;
  display: flex;
  align-items: center;
  padding-left: ${p => p.$indent ?? 6}px;
  background: ${p => (p.$sel ? '#dcdcdc' : 'transparent')};
  font-size: 10.500px;
  color: #111;
`;
const DownArrow = styled.span`
  width: 0;
  height: 0;
  flex: none;
  margin-right: 13px;
  border-left: 4.500px solid transparent;
  border-right: 4.500px solid transparent;
  border-top: 7px solid #8e8e8e;
`;
const Check = styled.span<{ $gap: number; $on?: boolean }>`
  width: 14px;
  height: 14px;
  flex: none;
  margin-right: ${p => p.$gap}px;
  border: 1px solid #a9a9a9;
  border-radius: 3px;
  background: ${p => (p.$on ? '#a8a8a8' : '#fff')};
  display: flex;
  align-items: center;
  justify-content: center;
  color: ${p => (p.$on ? '#fff' : '#333')};
`;
const LayerName = styled.span<{ $u?: boolean }>`
  font-weight: 700;
  font-size: 10px;
  text-decoration: ${p => (p.$u ? 'underline' : 'none')};
`;
const Swatch = styled.span<{ $c: string }>`
  width: 18px;
  height: 18px;
  flex: none;
  margin-right: 6px;
  background: ${p => p.$c};
  border: 1px solid #3a3a3a;
`;

const Tick = () => (
  <svg width="10" height="10" viewBox="0 0 10 10"><path d="M1.500 5.500l2.500 3L8.500 1" fill="none" stroke="currentColor" strokeWidth="1.400" /></svg>
);

/* ---------- map ---------- */
const MapPane = styled.div`
  height: 323px;
  flex: none;
  background: #fff;
  border-bottom: 2px solid #a8a8a8;
  overflow: hidden;
`;
const MapSvg = styled.svg`
  display: block;
  width: 865px;
  height: 321px;
  filter: blur(0.35px);
`;
const RED = '#ff3366';
const BLUE = '#1505b0';
const redA = [
  '255,420 288,445 218,536 186,512', '120,548 174,566 162,606 107,590', '0,480 44,500 0,585',
  '1105,140 1334,250 1278,365 1050,245', '1017,288 1122,340 1085,425 976,365', '1127,343 1153,356 1113,447 1085,432',
  '968,385 1075,438 1048,490 946,438', '940,442 1048,495 1072,458 1093,470 1042,572 908,505',
  '1275,410 1315,430 1285,495 1245,478', '1240,480 1280,500 1215,635 1173,612', '1290,515 1340,545 1270,660 1222,625',
  '1115,660 1150,680 1127,732 1088,712', '1085,716 1127,735 1150,685 1197,708 1090,915 1005,870',
  '1207,705 1315,758 1280,838 1250,825 1205,925 1118,882', '1255,858 1320,890 1320,965 1222,965', '730,938 775,965 715,965',
];
const redB = [
  '350,80 390,100 340,205 300,185', '395,108 425,122 378,222 345,205', '430,125 458,140 442,175 420,165', '462,142 485,155 470,188 445,178',
  '480,160 510,170 525,195 480,285 440,262 465,205', '408,192 428,205 408,248 388,238', '430,208 458,222 435,268 410,250',
  '283,185 358,225 318,315 238,275', '385,258 472,300 432,385 343,335',
  '460,0 610,0 590,45 525,25 515,55 445,20', '525,30 590,60 578,85 515,55', '395,0 445,0 440,18 390,0',
  '660,0 770,0 810,40 752,165 660,125 640,100', '780,0 822,0 805,38 775,22', '830,18 938,70 860,228 755,178',
  '945,0 1010,0 985,30', '1060,0 1195,0 1140,115 1055,75', '1000,45 1010,10 1030,20 1015,55', '1025,20 1045,30 1025,65 1015,58', '1045,30 1060,40 1040,70 1028,65',
  '1230,0 1305,0 1305,195 1175,130',
  '940,70 955,78 940,105 930,100', '960,80 975,88 960,120 945,112', '975,90 998,100 983,132 965,122',
  '925,112 965,130 955,150 915,130', '1000,105 1030,118 1018,145 988,132', '1040,125 1085,145 1055,195 1020,175',
  '905,135 960,160 945,185 900,165', '900,168 945,190 905,265 862,245', '985,145 1025,160 1018,178 978,160', '975,160 998,172 985,185 968,175',
  '970,185 990,195 978,212 958,205', '1005,185 1055,205 1040,232 995,210', '930,215 990,245 975,275 990,285 985,305 925,270', '995,228 1040,245 1005,315 980,298 1000,260',
  '1115,160 1265,235 1188,388 1042,318',
  '5,352 20,350 60,375 48,395 3,370', '90,335 130,355 108,420 60,395', '130,300 160,315 140,355 120,345', '160,315 195,335 170,372 140,355',
  '135,362 165,378 140,428 108,410', '160,392 175,398 165,440 140,430', '235,350 285,375 265,415 218,400', '285,372 335,400 322,430 270,420',
  '215,405 262,430 240,472 192,445', '265,420 320,445 308,475 260,450', '335,412 380,435 370,457 325,432',
  '25,432 90,465 65,515 0,480', '85,470 132,490 105,535 70,515', '60,525 105,545 35,688 -15,665',
  '145,483 225,520 175,623 95,580', '133,660 192,685 160,755 107,720',
  '65,772 185,830 165,885 35,820', '30,832 155,900 135,935 20,870', '0,870 135,940 120,965 0,965',
  '455,448 505,472 485,520 435,495', '510,472 540,488 518,530 492,520', '540,485 578,505 558,540 525,528', '580,505 680,553 665,595 625,580 590,565 560,545',
  '420,500 480,528 465,550 412,525', '412,530 462,552 450,590 398,560', '485,525 510,535 480,600 455,590', '515,540 552,555 520,620 488,605',
  '558,550 582,562 548,640 522,625', '585,580 618,595 585,648 552,635', '628,585 658,600 625,672 590,655',
  '660,592 740,630 720,655 655,628', '650,630 730,668 720,720 630,678', '760,592 805,615 770,690 720,665', '808,618 835,630 805,688 778,678',
  '838,632 882,658 850,708 810,690', '735,685 762,695 748,735 720,718', '770,690 800,705 775,750 748,735', '800,695 852,715 825,772 780,750',
  '895,660 1022,722 965,838 843,775', '510,680 545,695 520,760 478,745', '478,755 510,775 445,890 415,868', '560,700 600,720 552,820 505,798',
  '605,722 665,755 635,808 580,780', '578,790 632,815 605,850 562,828', '560,832 605,855 590,875 548,852', '558,865 595,885 582,895 550,880', '540,888 588,910 555,965 522,950',
  '1290,530 1305,540 1305,610 1265,590', '1250,600 1305,630 1305,660 1232,630', '1228,635 1305,675 1305,695 1222,655', '1215,655 1305,700 1305,805 1180,740', '1130,822 1268,882 1222,965 1098,910',
];
const blueA = ['487,170 726,293 602,538 360,412', '1153,373 1252,425 1168,595 1066,545'];
const blueB = ['-118,0 165,0 303,70 205,270 -160,85', '740,300 1123,480 1047,637 664,450', '370,608 510,675 415,875 270,808', '703,770 935,885 900,950 815,910 785,965 605,965', '225,855 440,965 165,965', '1070,955 1090,965 1060,965'];
const linesA = [
  'M600 0L568 70 785 185 880 0', 'M0 620L545 748', 'M0 672L520 790', 'M0 700L500 822', 'M0 860L28 765 390 850 420 870 448 905',
  'M950 0L650 590', 'M0 395L45 415 60 378 103 398 45 490', 'M1060 110L1000 230 1290 375', 'M1060 110L1320 240', 'M980 268L870 478 1040 570', 'M980 268L1320 440',
  'M1085 70L1130 0', 'M1085 70L1320 185', 'M850 512L700 785 780 800 1000 910 1320 1080', 'M850 512L1320 745', 'M880 550L790 705 815 775 995 860 1080 690 1030 660 1035 628 880 550',
  'M670 825L660 853 740 870 750 845 670 825', 'M750 845L1100 965', 'M640 898L605 965', 'M640 898L1000 1090',
];
const thinA = ['M490 0L0 640', 'M460 0L25 610', 'M350 0L0 310', 'M240 0L0 290', 'M155 0L100 110', 'M130 0L0 210', 'M735 718L775 718 875 550', 'M440 730L640 810 670 825', 'M1060 115L1030 230'];
const dashA = ['M975 0L560 770 415 965', 'M1085 0L690 720 545 965', 'M940 0L680 510'];
const linesB = [
  'M585 170L470 395 1060 695 1180 462 585 170', 'M450 438L395 560 975 860 1042 735 450 438', 'M150 295L410 415 355 540 -200 260', 'M225 535L335 575 220 797 0 680',
  'M375 603L940 890 955 905 935 965', 'M260 815L375 603', 'M260 815L520 950', 'M250 0L575 110 550 150 500 260', 'M610 130L660 0', 'M610 130L1195 420 1295 240 1000 90 800 0',
  'M1170 740L1280 520', 'M1170 740L1305 810', 'M1140 790L1085 910 1215 965', 'M1140 790L1305 860', 'M0 740L200 830 135 965',
];
const thinB = ['M590 200L670 240 650 298 555 255z', 'M80 615L103 620 75 688 45 675z', 'M495 800L465 860 490 885 480 920 520 935', 'M250 470L375 460 350 530'];
const dashB = ['M1300 350L985 965', 'M1280 240L1200 410', 'M1170 470L1065 690', 'M1030 740L985 850'];

const MapDrawing = () => (
  <MapSvg viewBox="0 0 865 321">
    <g transform="scale(0.3333)">
      <g fill="none" stroke="#555" strokeWidth="2.200">{linesA.map((x, i) => <path key={i} d={x} />)}</g>
      <g fill="none" stroke="#aaa" strokeWidth="2">{thinA.map((x, i) => <path key={i} d={x} strokeDasharray="7 3" />)}</g>
      <g fill="none" stroke="#444" strokeWidth="2.200" strokeDasharray="7 5">{dashA.map((x, i) => <path key={i} d={x} />)}</g>
      <ellipse cx="462" cy="652" rx="56" ry="47" fill="none" stroke="#888" strokeWidth="2.500" />
      {redA.map((x, i) => <polygon key={i} points={x} fill={RED} stroke="#222" strokeWidth="2.400" />)}
      {blueA.map((x, i) => <polygon key={i} points={x} fill={BLUE} stroke="#111" strokeWidth="2" />)}
    </g>
    <g transform="translate(430 0) scale(0.3333)">
      <g fill="none" stroke="#555" strokeWidth="2.600" strokeDasharray="22 2">{linesB.map((x, i) => <path key={i} d={x} />)}</g>
      <g fill="none" stroke="#999" strokeWidth="2.200">{thinB.map((x, i) => <path key={i} d={x} />)}</g>
      <g fill="none" stroke="#777" strokeWidth="2.200" strokeDasharray="6 5">{dashB.map((x, i) => <path key={i} d={x} />)}</g>
      {redB.map((x, i) => <polygon key={i} points={x} fill={RED} stroke="#222" strokeWidth="2.400" />)}
      {blueB.map((x, i) => <polygon key={i} points={x} fill={BLUE} stroke="#111" strokeWidth="2" />)}
    </g>
  </MapSvg>
);

/* ---------- console ---------- */
const Console = styled.div`
  flex: 1;
  min-height: 0;
  display: flex;
  flex-direction: column;
`;
const SubBar = styled.div`
  height: 8px;
  flex: none;
  background: #dedede;
  border-bottom: 1px solid #a4a4a4;
`;
const Editor = styled.div`
  height: 232px;
  flex: none;
  display: flex;
  background: #fff;
  padding-top: 1px;
`;
const Gutter = styled.div`
  width: 29px;
  flex: none;
  background: #f0f0f0;
  margin-top: -1px;
  padding: 1px 2px 0 0;
  text-align: right;
  font: 10px/14px "DejaVu Sans Mono", monospace;
  color: #333;
`;
const Code = styled.div`
  padding-left: 2px;
  font: 10px/14px "DejaVu Sans Mono", "Noto Sans CJK JP", monospace;
  color: #333;
`;
const CodeLine = styled.div`
  height: 14px;
  white-space: pre;
`;
const Jp = styled.span`
  font: 300 10px/14px ${CJK};
  color: #8c8c8c;
`;
const Splitter = styled.div`
  height: 4px;
  flex: none;
  background: #dcdcdc;
  border-top: 1px solid #b0b0b0;
  border-bottom: 1px solid #a4a4a4;
  display: flex;
  justify-content: center;
  &::after {
    content: '';
    width: 6px;
    height: 4px;
    margin-top: -1px;
    border-radius: 1px;
    background: #bcbcbc;
  }
`;
const Prompt = styled.div`
  flex: 1;
  background: #fff;
  padding: 2px 1px;
  font: 9.300px/12px "DejaVu Sans Mono", monospace;
  color: #333;
`;
const CloseGlyph = () => (
  <svg width="8" height="8" viewBox="0 0 8 8"><path d="M1 1l6 6M7 1L1 7" stroke="#fff" strokeWidth="1.800" /></svg>
);
const FloatGlyph = () => (
  <svg width="10" height="10" viewBox="0 0 10 10"><path d="M3.500 3V1.500h5v4H7M1.500 3.500h5v4.500h-5z" fill="none" stroke="#fff" strokeWidth="1" /></svg>
);
const Controls = () => (
  <DockControls>
    <DockControl><CloseGlyph /></DockControl>
    <DockControl><FloatGlyph /></DockControl>
  </DockControls>
);

/* ---------- status bar ---------- */
const StatusBar = styled.div`
  height: 44px;
  flex: none;
  display: flex;
  align-items: center;
  padding: 0 0 2px 4px;
  background: linear-gradient(#e6e6e6, #b7b7b7);
  border-top: 1px solid #8f8f8f;
  font-size: 10.500px;
  color: #111;
`;
const SearchBox = styled.div`
  width: 199px;
  height: 20px;
  flex: none;
  background: #fff;
  border: 1px solid #c4c4c4;
  display: flex;
  align-items: center;
  gap: 8px;
  padding-left: 7px;
  font: 300 10.500px ${CJK};
  color: #777;
  margin-right: 10px;
`;
const StatusText = styled.span<{ $w: number }>`
  width: ${p => p.$w}px;
  flex: none;
  white-space: nowrap;
  overflow: hidden;
  -webkit-text-stroke: 0.15px #111;
  font-size: 10.300px;
`;
const StatusJp = styled.span<{ $w: number }>`
  width: ${p => p.$w}px;
  flex: none;
  white-space: nowrap;
  font: 300 10.500px ${CJK};
  color: #555;
  -webkit-text-stroke: 0;
`;
const Field = styled.div<{ $w: number }>`
  width: ${p => p.$w}px;
  height: 21px;
  flex: none;
  background: #fff;
  border: 1px solid #c8c8c8;
  display: flex;
  align-items: center;
  padding-left: 4px;
  font-size: 10.500px;
  -webkit-text-stroke: 0.15px #111;
  position: relative;
`;
const ComboArrow = styled.span`
  position: absolute;
  right: -1px;
  top: -1px;
  bottom: -1px;
  width: 17px;
  background: linear-gradient(#b9b9b9, #8e8e8e);
  border-radius: 0 3px 3px 0;
  display: flex;
  align-items: center;
  justify-content: center;
  color: #fff;
`;
const SquareTool = styled.div<{ $w: number; $h: number; $ml?: number }>`
  width: ${p => p.$w}px;
  height: ${p => p.$h}px;
  flex: none;
  margin-left: ${p => p.$ml ?? 0}px;
  background: #ececec;
  border: 1px solid #bdbdbd;
  display: flex;
  align-items: center;
  justify-content: center;
  gap: 5px;
  font-size: 10px;
  color: #222;
  -webkit-text-stroke: 0.2px #222;
`;
const Spinner = styled.div<{ $mr: number }>`
  width: 12px;
  height: 21px;
  flex: none;
  margin: 0 ${p => p.$mr}px 0 4px;
  border-radius: 5px;
  background: #fff;
  border: 1px solid #c4c4c4;
  display: flex;
  flex-direction: column;
  align-items: center;
  justify-content: center;
  color: #444;
`;
const Gap = styled.span<{ $w: number }>`
  width: ${p => p.$w}px;
  flex: none;
`;

const treeRows: [string, string, boolean, boolean][] = [
  ['star', 'お気に入り', false, true],
  ['project', 'プロジェクトホーム', true, true],
  ['folder', 'ホーム', true, true],
  ['folder', '/', true, false],
  ['folder', '/Volumes', true, false],
  ['gpkgsm', 'GeoPackage', false, false],
  ['feather', 'SpatiaLite', true, false],
  ['postgis', 'PostGIS', true, false],
  ['mssql', 'MSSQL', false, false],
  ['db2', 'DB2', false, false],
  ['wms', 'WMS/WMTS', false, false],
  ['wms', 'XYZ Tiles', true, false],
  ['wcs', 'WCS', false, false],
  ['wfs', 'WFS', false, false],
  ['ows', 'OWS', false, false],
];

const browserTools: Item[] = [b('addlayer', 30), b('refresh', 30), b('filter', 30), b('collapse', 30), b('info', 30)];
const layerTools: [string, number, number, boolean][] = [['style', 28, 0, false], ['addgroup', 31, 0, false], ['eye', 31, 0, false], ['filter', 29, 0, false], ['expr', 43, 0, true], ['expand', 30, 0, false], ['collapse', 30, 0, false], ['removelayer', 28, 0, false]];
const consoleTools: Item[] = [b('broom', 28), b('python', 32), s(6), b('script', 36), s(3), b('wrench', 38), b('help', 22)];

const DockTool = styled.div<{ $w: number }>`
  width: ${p => p.$w}px;
  height: 100%;
  flex: none;
  display: flex;
  align-items: center;
  justify-content: center;
`;
const DockCaret = styled(Caret)`
  margin-left: 0;
`;
const JpInline = styled.span`
  font-weight: 300;
`;

const renderDock = (items: Item[], size: number) => items.map((it, i) => (
  it.k === 's'
    ? <DotSep key={i} $w={it.w} />
    : it.k === 'b'
      ? <DockTool key={i} $w={it.w ?? 30}><Icon n={it.i} size={size} /></DockTool>
      : null
));

export default function App() {
  return (
    <>
      <Global />
      <Desktop>
        <Window>
          <TitleBar>
            <Lights><Light /><Light /><Light /></Lights>
            *sample02 - QGIS
          </TitleBar>
          <Toolbar>{renderItems(row1)}</Toolbar>
          <Toolbar>{renderItems(row2)}</Toolbar>
          <Toolbar $h={37}>{renderItems(row3)}</Toolbar>
          <Body>
            <LeftColumn>
              <DockHeader $h={21}><Controls />ブラウザ</DockHeader>
              <DockBar $h={29}>{renderDock(browserTools, 17)}</DockBar>
              <Tree $h={303}>
                {treeRows.map(([ic, label, arrow, jp]) => (
                  <TreeRow key={label + ic}>
                    <Arrow $show={arrow} />
                    <TreeIcon><Icon n={ic} size={16} /></TreeIcon>
                    {jp ? <JpLabel>{label}</JpLabel> : label}
                  </TreeRow>
                ))}
              </Tree>
              <DockHeader $h={24}><Controls />レイヤー</DockHeader>
              <DockBar $h={29}>
                {layerTools.map(([ic, w, , caret]) => (
                  <DockTool key={ic + w} $w={w}>
                    <Icon n={ic} size={17} />
                    {caret && <DockCaret />}
                  </DockTool>
                ))}
              </DockBar>
              <Tree>
                <LayerRow $sel>
                  <DownArrow />
                  <Check $gap={12}><Tick /></Check>
                  <Icon n="polylayer" size={18} />
                  <Gap $w={6} />
                  <LayerName $u>sample_pol_9</LayerName>
                </LayerRow>
                <LayerRow $indent={47}>
                  <Check $gap={13}><Tick /></Check>
                  <Swatch $c={RED} />0
                </LayerRow>
                <LayerRow $indent={47}>
                  <Check $gap={13}><Tick /></Check>
                  <Swatch $c={BLUE} />1
                </LayerRow>
                <LayerRow $h={23}>
                  <DownArrow />
                  <Check $gap={12}><Tick /></Check>
                  <Icon n="mierune" size={16} />
                  <Gap $w={8} />
                  <LayerName>MIERUNE MONO</LayerName>
                </LayerRow>
              </Tree>
            </LeftColumn>
            <RightColumn>
              <MapPane><MapDrawing /></MapPane>
              <Console>
                <DockHeader $h={23}><Controls /><span>Python<JpInline>コンソール</JpInline></span></DockHeader>
                <DockBar $h={28}>{renderDock(consoleTools, 17)}</DockBar>
                <SubBar />
                <Editor>
                  <Gutter>1<br />2<br />3<br />4<br />5</Gutter>
                  <Code>
                    <CodeLine>Python <Jp>コンソール</Jp></CodeLine>
                    <CodeLine>QGIS API interface<Jp>にアクセスするには</Jp>iface<Jp>を使います</Jp>{'. '}<Jp>詳細を表示するには</Jp>help(iface)<Jp>と入力します</Jp></CodeLine>
                    <CodeLine>{'>>> layer = iface.activeLayer()'}</CodeLine>
                    <CodeLine>{'>>> layer.triggerRepaint()'}</CodeLine>
                  </Code>
                </Editor>
                <Splitter />
                <Prompt>{'>>>'}</Prompt>
              </Console>
            </RightColumn>
          </Body>
          <StatusBar>
            <SearchBox><Search size={14} color="#777" strokeWidth={1.500} />検索（⌘K）</SearchBox>
            <StatusText $w={152}>0<JpLabel>個の地物がレイヤ</JpLabel>sample_p</StatusText>
            <StatusJp $w={25}>座標</StatusJp>
            <Field $w={108}>-5999.2,-35761.5</Field>
            <SquareTool $w={27} $h={24}><Icon n="mouse" size={18} /></SquareTool>
            <Gap $w={8} />
            <StatusJp $w={26}>縮尺</StatusJp>
            <Field $w={111}>1:1,476<ComboArrow><ChevronDown size={11} strokeWidth={2.500} /></ComboArrow></Field>
            <SquareTool $w={26} $h={26}><Icon n="lock" size={18} /></SquareTool>
            <Gap $w={10} />
            <StatusJp $w={25}>拡大</StatusJp>
            <Field $w={79}>100%</Field>
            <Spinner $mr={10}><ChevronUp size={8} strokeWidth={2.500} /><ChevronDown size={8} strokeWidth={2.500} /></Spinner>
            <StatusJp $w={33}>回転</StatusJp>
            <Field $w={69}>0.0°</Field>
            <Spinner $mr={7}><ChevronUp size={8} strokeWidth={2.500} /><ChevronDown size={8} strokeWidth={2.500} /></Spinner>
            <Check $gap={4} $on><Tick /></Check>
            <StatusJp $w={35}>レンダ</StatusJp>
            <SquareTool $w={95} $h={26}><Icon n="crs" size={14} />EPSG:2451</SquareTool>
            <SquareTool $w={26} $h={27} $ml={6}><Icon n="chat" size={18} /></SquareTool>
          </StatusBar>
        </Window>
      </Desktop>
    </>
  );
}
